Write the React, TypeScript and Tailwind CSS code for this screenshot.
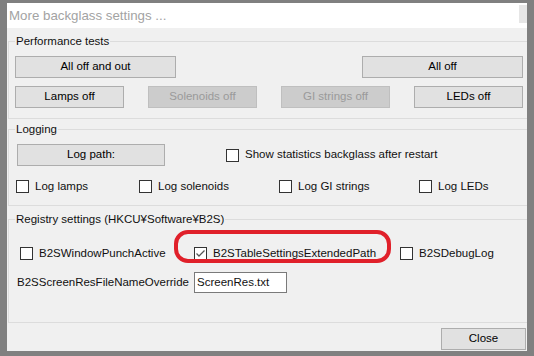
import type { ReactNode } from 'react'

const font = { fontFamily: '"Liberation Sans", Arial, sans-serif' }

function Btn({ w, children, disabled }: { w: string; children: ReactNode; disabled?: boolean }) {
    return (
        <div
            className={
                'flex h-[22px] shrink-0 items-center justify-center border ' +
                w +
                (disabled
                    ? ' border-[#bfbfbf] bg-[#cccccc] text-[#9a9a9a]'
                    : ' border-[#adadad] bg-[#e1e1e1] text-black')
            }
        >
            {children}
        </div>
    )
}

function Check({ label, checked, w }: { label: string; checked?: boolean; w?: string }) {
    return (
        <div className={'flex shrink-0 items-center gap-[6px] ' + (w ?? '')}>
            <div className="flex h-[13px] w-[13px] shrink-0 items-center justify-center border border-[#333333] bg-white">
                {checked && (
                    <svg width="11" height="11" viewBox="0 0 11 11">
                        <path d="M1.5 5.5 L4 8 L9.5 2.5" stroke="#555555" strokeWidth="1.3" fill="none" />
                    </svg>
                )}
            </div>
            <span>{label}</span>
        </div>
    )
}

function Group({ title, h, mt, children }: { title: string; h: string; mt: string; children: ReactNode }) {
    return (
        <div className={'relative ml-[1px] border border-r-0 border-[#dcdcdc] ' + h + ' ' + mt}>
            <span className="absolute -top-[8px] left-[6px] bg-[#f0f0f0] px-[1px] leading-[14px]">
                {title}
            </span>
            {children}
        </div>
    )
}

export default function App() {
    return (
        <div
            className="relative flex h-[356px] w-[534px] flex-col bg-[#808080] px-[7px] pb-[5px] pt-[3px] text-[11.5px] text-[#111111]"
            style={font}
        >
            <div className="flex h-[25px] shrink-0 bg-white">
                <span className="mt-[4px] pl-[2px] text-[13.3px] leading-[18px] text-[#a3a3a3]">
                    More backglass settings ...
                </span>
                <div className="ml-auto mt-[2px] h-[18px] w-[8px] bg-[#e6e6e6]" />
            </div>
            <div className="flex flex-1 flex-col bg-[#f0f0f0]">
                <Group title="Performance tests" h="h-[78px]" mt="mt-[13px]">
                    <div className="flex flex-col gap-[8px] pl-[6px] pr-[4px] pt-[14px]">
                        <div className="flex justify-between">
                            <Btn w="w-[161px]">All off and out</Btn>
                            <Btn w="w-[161px]">All off</Btn>
                        </div>
                        <div className="flex gap-[24px]">
                            <Btn w="w-[109px]">Lamps off</Btn>
                            <Btn w="w-[109px]" disabled>
                                Solenoids off
                            </Btn>
                            <Btn w="w-[109px]" disabled>
                                GI strings off
                            </Btn>
                            <Btn w="w-[109px]">LEDs off</Btn>
                        </div>
                    </div>
                </Group>
                <Group title="Logging" h="h-[77px]" mt="mt-[10px]">
                    <div className="flex flex-col gap-[12px] pl-[8px] pt-[14px]">
                        <div className="flex items-center">
                            <Btn w="w-[148px]">Log path:</Btn>
                            <Check label="Show statistics backglass after restart" w="ml-[61px]" />
                        </div>
                        <div className="-ml-[1px] flex items-center">
                            <Check label="Log lamps" w="w-[123px]" />
                            <Check label="Log solenoids" w="w-[140px]" />
                            <Check label="Log GI strings" w="w-[140px]" />
                            <Check label="Log LEDs" />
                        </div>
                    </div>
                </Group>
                <Group title="Registry settings (HKCU¥Software¥B2S)" h="h-[104px]" mt="mt-[13px]">
                    <div className="flex flex-col pt-[25px]">
                        <div className="flex items-center pl-[11px]">
                            <Check label="B2SWindowPunchActive" w="w-[174px]" />
                            <Check label="B2STableSettingsExtendedPath" checked w="w-[206px]" />
                            <Check label="B2SDebugLog" />
                        </div>
                        <div className="mt-[10px] flex items-center pl-[8px]">
                            <span className="w-[177px]">B2SScreenResFileNameOverride</span>
                            <div className="flex h-[21px] w-[93px] items-center border border-[#7a7a7a] bg-white pl-[2px]">
                                ScreenRes.txt
                            </div>
                        </div>
                    </div>
                </Group>
                <div className="mt-[5px] flex justify-end pr-[1px]">
                    <Btn w="w-[85px]">Close</Btn>
                </div>
            </div>
            <div className="pointer-events-none absolute left-[174px] top-[230px] h-[33px] w-[217px] rounded-[14px] border-[4px] border-[#e0202a]" />
        </div>
    )
}
